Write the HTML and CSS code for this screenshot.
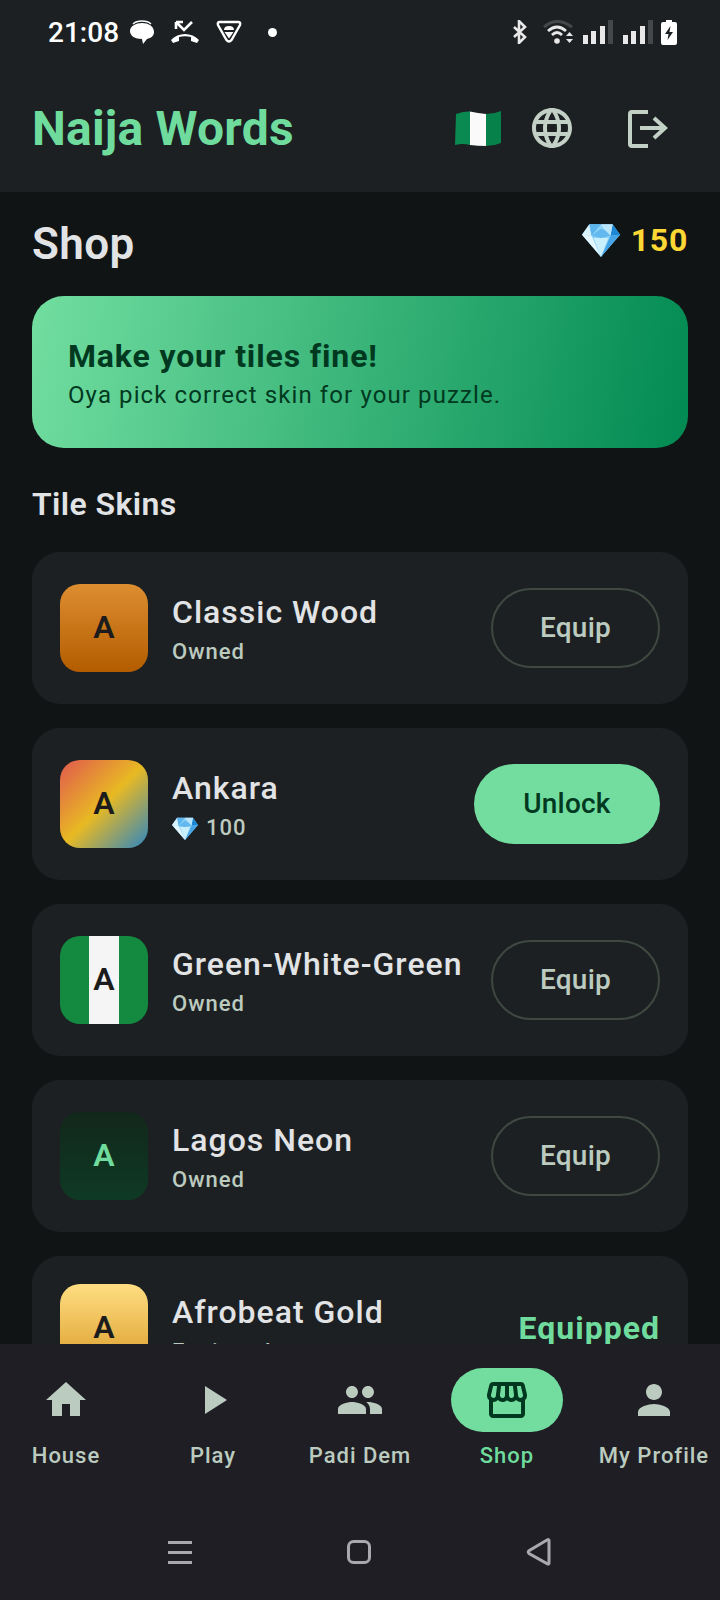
FILE: index.html
```html
<!DOCTYPE html>
<html lang="en">
<head>
  <meta charset="UTF-8" />
  <meta name="viewport" content="width=device-width, initial-scale=1.0"/>
  <title>Naija Words - Shop</title>
  <link rel="stylesheet" href="styles.css">
</head>
<body>
  <svg class="defs" width="0" height="0">
    <symbol id="gem" viewBox="0 0 36 32">
      <polygon points="7,1 29,1 36,11 18,32 0,11" fill="#8ed4f8"/>
      <polygon points="29,1 36,11 27,12" fill="#1a86d4"/>
      <polygon points="7,1 0,11 9,12" fill="#d8f3fd"/>
      <polygon points="7,1 18,1 9,12" fill="#5db5ee"/>
      <polygon points="18,1 29,1 27,12 22,7" fill="#b9e6fb"/>
      <polygon points="9,12 18,5 22,7 27,12 18,14" fill="#63b8ef"/>
      <polygon points="0,11 9,12 18,32" fill="#e4f7fe"/>
      <polygon points="27,12 36,11 18,32" fill="#45a5e6"/>
      <polygon points="11,14 25,14 18,32" fill="#c9eefc"/>
    </symbol>
    <symbol id="signal" viewBox="0 0 30 24">
      <rect x="0" y="15" width="5" height="9" fill="#e8e8e8"/>
      <rect x="8" y="11" width="5" height="13" fill="#e8e8e8"/>
      <rect x="17" y="6" width="5" height="18" fill="#e8e8e8"/>
      <rect x="25" y="0" width="5" height="24" fill="#45484a"/>
    </symbol>
  </svg>

  <div class="status-bar">
    <div class="status-group">
      <span class="clock">21:08</span>
      <svg class="ic-msg" width="24" height="24" viewBox="0 0 24 24">
        <path d="M3 4q3-3 9-3t9 3" fill="none" stroke="#fff" stroke-width="1.4"/>
        <path d="M12 3c6 0 12 3 12 9 0 4-3 6-7 7l-4 5-1-5C5 19 0 16 0 11 0 6 6 3 12 3z" fill="#fff"/>
      </svg>
      <svg width="30" height="24" viewBox="0 0 30 24">
        <path d="M6 2v7M6 2h7M6 2l8 8 8-8" fill="none" stroke="#fff" stroke-width="2.6"/>
        <path d="M1 20c7-8 21-8 28 0l-2 3-6-2v-4c-4-1-8-1-12 0v4l-6 2z" fill="#fff"/>
      </svg>
      <svg width="26" height="24" viewBox="0 0 26 24">
        <path d="M4 2h18q3 0 2 3L15.500 20q-2.500 3-5 0L2 5Q1 2 4 2z" fill="none" stroke="#fff" stroke-width="2.4"/>
        <path d="M8 10q0-4 5-4t5 4z" fill="#fff"/>
        <path d="M8.500 12h9L13 18.500z" fill="#fff"/>
      </svg>
      <span class="notif-dot"></span>
    </div>
    <div class="status-group status-right">
      <svg class="ic-bt" width="14" height="24" viewBox="0 0 14 24">
        <path d="M1 7l11 10-6 6V1l6 6L1 17" fill="none" stroke="#e8e8e8" stroke-width="2.6"/>
      </svg>
      <svg width="30" height="24" viewBox="0 0 30 24">
        <path d="M1 7Q14-4 29 7" fill="none" stroke="#45484a" stroke-width="3"/>
        <path d="M5 11q9-8 18 0" fill="none" stroke="#e8e8e8" stroke-width="2.8"/>
        <path d="M9 15q5-5 10 0" fill="none" stroke="#e8e8e8" stroke-width="2.8"/>
        <circle cx="14" cy="21" r="2.8" fill="#e8e8e8"/>
        <path d="M23 16l3.500-4 3.500 4zM23 19h7l-3.500 4z" fill="#e8e8e8"/>
      </svg>
      <svg width="30" height="24"><use href="#signal"/></svg>
      <svg width="30" height="24"><use href="#signal"/></svg>
      <svg class="ic-bat" width="16" height="25" viewBox="0 0 16 25">
        <path d="M5 0h6v2h3q2 0 2 2v19q0 2-2 2H2q-2 0-2-2V4q0-2 2-2h3z" fill="#fff"/>
        <path d="M9.500 6L4 14h3.500L6.500 20 12 12H8.500z" fill="#1c2022"/>
      </svg>
    </div>
  </div>

  <header class="app-bar">
    <h1 class="app-title">Naija Words</h1>
    <svg class="flag" width="46" height="36" viewBox="0 0 46 36">
      <path d="M1 4q7-3 14-2.500V35Q8 33 0 35z" fill="#0a8a50"/>
      <path d="M15 1.500q8 1.500 16 2.500v32q-8 0-16-1z" fill="#fafafa"/>
      <path d="M31 4q8 0 15-3v32q-7 3-15 3z" fill="#07814a"/>
    </svg>
    <svg class="icon-btn" width="48" height="48" viewBox="0 0 24 24">
      <path fill="#c2d0c5" d="M11.990 2C6.470 2 2 6.480 2 12s4.470 10 9.990 10C17.520 22 22 17.520 22 12S17.520 2 11.990 2zm6.930 6h-2.950c-.32-1.250-.78-2.450-1.380-3.560 1.840.63 3.370 1.910 4.330 3.560zM12 4.040c.83 1.200 1.480 2.530 1.910 3.960h-3.820c.43-1.430 1.080-2.760 1.910-3.960zM4.260 14C4.100 13.360 4 12.690 4 12s.1-1.360.26-2h3.380c-.08.66-.14 1.320-.14 2 0 .68.06 1.340.14 2H4.260zm.82 2h2.950c.32 1.250.78 2.450 1.380 3.560-1.840-.63-3.370-1.900-4.330-3.560zm2.950-8H5.080c.96-1.660 2.490-2.930 4.330-3.560C8.810 5.550 8.350 6.750 8.030 8zM12 19.960c-.83-1.200-1.480-2.530-1.910-3.960h3.820c-.43 1.430-1.080 2.760-1.910 3.960zM14.340 14H9.660c-.09-.66-.16-1.320-.16-2 0-.68.07-1.350.16-2h4.680c.09.65.16 1.320.16 2 0 .68-.07 1.340-.16 2zm.25 5.560c.6-1.110 1.060-2.310 1.380-3.560h2.950c-.96 1.650-2.490 2.930-4.330 3.560zM16.360 14c.08-.66.14-1.320.14-2 0-.68-.06-1.340-.14-2h3.380c.16.64.26 1.310.26 2s-.1 1.360-.26 2h-3.380z"/>
    </svg>
    <svg class="icon-btn logout" width="48" height="48" viewBox="0 0 48 48">
      <path d="M24 8H8q-2 0-2 2v30q0 2 2 2h16" fill="none" stroke="#c2d0c5" stroke-width="4"/>
      <path d="M16 24h24M30 14l11 10-11 10" fill="none" stroke="#c2d0c5" stroke-width="4"/>
    </svg>
  </header>

  <main class="content">
    <div class="page-head">
      <h2 class="page-title">Shop</h2>
      <div class="balance">
        <svg width="38" height="34"><use href="#gem"/></svg>
        <span>150</span>
      </div>
    </div>

    <section class="banner">
      <h3 class="banner-title">Make your tiles fine!</h3>
      <p class="banner-sub">Oya pick correct skin for your puzzle.</p>
    </section>

    <h3 class="section-title">Tile Skins</h3>

    <div class="skin-list">
      <div class="skin-card">
        <div class="swatch swatch-wood">A</div>
        <div class="skin-info">
          <div class="skin-name">Classic Wood</div>
          <div class="skin-meta">Owned</div>
        </div>
        <button class="btn btn-outline">Equip</button>
      </div>

      <div class="skin-card">
        <div class="swatch swatch-ankara">A</div>
        <div class="skin-info">
          <div class="skin-name">Ankara</div>
          <div class="skin-meta"><svg width="26" height="23"><use href="#gem"/></svg> 100</div>
        </div>
        <button class="btn btn-fill">Unlock</button>
      </div>

      <div class="skin-card">
        <div class="swatch swatch-gwg">A</div>
        <div class="skin-info">
          <div class="skin-name">Green-White-Green</div>
          <div class="skin-meta">Owned</div>
        </div>
        <button class="btn btn-outline">Equip</button>
      </div>

      <div class="skin-card">
        <div class="swatch swatch-neon">A</div>
        <div class="skin-info">
          <div class="skin-name">Lagos Neon</div>
          <div class="skin-meta">Owned</div>
        </div>
        <button class="btn btn-outline">Equip</button>
      </div>

      <div class="skin-card skin-card-short">
        <div class="swatch swatch-gold">A</div>
        <div class="skin-info">
          <div class="skin-name">Afrobeat Gold</div>
          <div class="skin-meta">Equipped</div>
        </div>
        <span class="equipped">Equipped</span>
      </div>
    </div>
  </main>

  <div class="bottom">
    <nav class="nav">
      <div class="nav-item">
        <div class="nav-icon">
          <svg width="48" height="48" viewBox="0 0 24 24"><path d="M10 20v-6h4v6h5v-8h3L12 3 2 12h3v8z"/></svg>
        </div>
        <span>House</span>
      </div>
      <div class="nav-item">
        <div class="nav-icon">
          <svg width="48" height="48" viewBox="0 0 24 24"><path d="M8 5v14l11-7z"/></svg>
        </div>
        <span>Play</span>
      </div>
      <div class="nav-item">
        <div class="nav-icon">
          <svg width="48" height="48" viewBox="0 0 24 24"><path d="M16 11c1.660 0 2.990-1.340 2.990-3S17.660 5 16 5c-1.660 0-3 1.340-3 3s1.340 3 3 3zm-8 0c1.660 0 2.990-1.340 2.990-3S9.660 5 8 5C6.340 5 5 6.340 5 8s1.340 3 3 3zm0 2c-2.330 0-7 1.170-7 3.500V19h14v-2.500c0-2.330-4.670-3.500-7-3.500zm8 0c-.29 0-.62.02-.97.05 1.160.84 1.970 1.970 1.970 3.450V19h6v-2.500c0-2.330-4.670-3.500-7-3.500z"/></svg>
        </div>
        <span>Padi Dem</span>
      </div>
      <div class="nav-item active">
        <div class="nav-icon">
          <svg width="48" height="48" viewBox="0 0 24 24"><path d="M21.900 8.890l-1.050-4.370c-.22-.9-1-1.520-1.910-1.520H5.050c-.9 0-1.690.63-1.900 1.520L2.100 8.890c-.24 1.020-.02 2.060.62 2.880.08.11.19.19.28.29V19c0 1.100.9 2 2 2h14c1.100 0 2-.9 2-2v-6.940c.09-.09.2-.18.28-.28.64-.82.87-1.870.62-2.890zm-2.990-3.900l1.050 4.370c.1.42.01.84-.25 1.170-.14.18-.44.47-.94.47-.61 0-1.140-.49-1.210-1.140L16.980 5l1.930-.01zM13 5h1.960l.54 4.520c.05.39-.07.78-.33 1.070-.22.26-.54.41-.95.41-.67 0-1.220-.59-1.220-1.310V5zM8.490 9.520L9.040 5H11v4.690c0 .72-.55 1.310-1.290 1.310-.34 0-.65-.15-.89-.41-.25-.29-.37-.68-.33-1.070zm-4.450-.16L5.050 5h1.970l-.58 4.860c-.08.65-.6 1.140-1.210 1.140-.49 0-.8-.29-.93-.47-.27-.32-.36-.75-.26-1.170zM5 19v-6.030c.08.01.15.03.23.03.87 0 1.660-.36 2.240-.95.6.6 1.400.95 2.310.95.87 0 1.650-.36 2.230-.93.59.57 1.390.93 2.290.93.84 0 1.640-.35 2.240-.95.58.59 1.370.95 2.240.95.08 0 .15-.02.23-.03V19H5z"/></svg>
        </div>
        <span>Shop</span>
      </div>
      <div class="nav-item">
        <div class="nav-icon">
          <svg width="48" height="48" viewBox="0 0 24 24"><path d="M12 12c2.210 0 4-1.790 4-4s-1.790-4-4-4-4 1.790-4 4 1.790 4 4 4zm0 2c-2.670 0-8 1.340-8 4v2h16v-2c0-2.660-5.330-4-8-4z"/></svg>
        </div>
        <span>My Profile</span>
      </div>
    </nav>

    <div class="gesture-bar">
      <svg width="24" height="24" viewBox="0 0 24 24">
        <path d="M0 2.500h24M0 12.500h24M0 22.500h24" stroke="#a9a9ad" stroke-width="3"/>
      </svg>
      <svg width="24" height="24" viewBox="0 0 24 24">
        <rect x="1.500" y="1.500" width="21" height="21" rx="5" fill="none" stroke="#a9a9ad" stroke-width="3"/>
      </svg>
      <svg width="26" height="28" viewBox="0 0 26 28">
        <path d="M23 2.500V25q0 1.500-1.500.8L3 15.500q-1.500-1.500 0-2.800L21 2q2-1 2 .5z" fill="none" stroke="#a9a9ad" stroke-width="3"/>
      </svg>
    </div>
  </div>
</body>
</html>
```

FILE: styles.css
```css
* {
  box-sizing: border-box;
  margin: 0;
  padding: 0;
  font-family: 'Roboto', sans-serif;
}

body {
  width: 720px;
  height: 1600px;
  background: #101415;
  color: #e2e3e5;
  display: flex;
  flex-direction: column;
  overflow: hidden;
}

.defs {
  position: absolute;
}

/* status bar */
.status-bar {
  height: 64px;
  background: #1c2022;
  display: flex;
  justify-content: space-between;
  align-items: center;
  padding: 0 43px 0 48px;
}

.status-group {
  display: flex;
  align-items: center;
  gap: 16px;
}

.status-right {
  gap: 10px;
}

.clock {
  font-size: 28px;
  font-weight: 500;
  color: #fff;
  margin-right: -5px;
}

.notif-dot {
  width: 9px;
  height: 9px;
  border-radius: 50%;
  background: #fff;
  margin-left: 10px;
}

.ic-bt {
  margin-right: 6px;
}

.ic-bat {
  margin-left: -2px;
}

/* top bar */
.app-bar {
  height: 128px;
  background: #1c2022;
  display: flex;
  align-items: center;
  padding: 0 48px 0 32px;
}

.app-title {
  font-size: 48px;
  font-weight: 700;
  color: #6fdc9e;
  letter-spacing: 0.2px;
  margin-right: auto;
}

.flag {
  margin-right: 27px;
}

.logout {
  margin-left: 48px;
}

/* page content */
.content {
  flex: 1;
  min-height: 0;
  overflow: hidden;
  padding: 20px 32px 0;
}

.page-head {
  height: 64px;
  display: flex;
  justify-content: space-between;
  align-items: flex-start;
  margin-bottom: 20px;
}

.page-title {
  font-size: 44px;
  font-weight: 600;
  line-height: 64px;
  letter-spacing: 0.4px;
}

.balance {
  height: 40px;
  margin-top: 8px;
  display: flex;
  align-items: center;
  gap: 11px;
  font-size: 32px;
  font-weight: 700;
  letter-spacing: 0.7px;
  color: #fdd835;
}

.banner {
  height: 152px;
  border-radius: 32px;
  padding: 0 36px;
  background: linear-gradient(100deg, #72dea0 0%, #018a52 100%);
  display: flex;
  flex-direction: column;
  justify-content: center;
  color: #00391f;
}

.banner-title {
  font-size: 32px;
  font-weight: 700;
  letter-spacing: 0.85px;
  line-height: 44px;
}

.banner-sub {
  font-size: 24px;
  letter-spacing: 1.1px;
  line-height: 32px;
  margin-top: 1px;
}

.section-title {
  font-size: 32px;
  font-weight: 600;
  line-height: 40px;
  letter-spacing: 0.4px;
  margin: 36px 0 28px;
}

.skin-list {
  display: flex;
  flex-direction: column;
  gap: 24px;
}

.skin-card {
  height: 152px;
  flex-shrink: 0;
  background: #1c2022;
  border-radius: 28px;
  padding: 0 28px;
  display: flex;
  align-items: center;
}

.skin-card-short {
  height: 144px;
}

.swatch {
  width: 88px;
  height: 88px;
  border-radius: 20px;
  flex-shrink: 0;
  display: flex;
  align-items: center;
  justify-content: center;
  padding-bottom: 2px;
  font-size: 32px;
  font-weight: 600;
  color: #1c1c1c;
  margin-right: 24px;
}

.swatch-wood {
  background: linear-gradient(180deg, #dd8e30, #b35c00);
}

.swatch-ankara {
  background: linear-gradient(135deg, #e0584f 0%, #e8b923 50%, #2f86c1 100%);
}

.swatch-gwg {
  background: linear-gradient(90deg, #138a3f 33.3%, #f5f5f5 33.3%, #f5f5f5 66.6%, #138a3f 66.6%);
}

.swatch-neon {
  background: linear-gradient(180deg, #12271a, #0e3a24);
  color: #6fdc9e;
}

.swatch-gold {
  background: linear-gradient(180deg, #ffde82, #d99a26);
}

.skin-info {
  flex: 1;
  min-width: 0;
  padding-top: 2px;
}

.skin-name {
  font-size: 32px;
  font-weight: 500;
  letter-spacing: 1px;
  line-height: 44px;
  white-space: nowrap;
}

.skin-meta {
  font-size: 22px;
  font-weight: 500;
  letter-spacing: 1px;
  line-height: 32px;
  margin-top: 2px;
  color: #bccbbf;
  display: flex;
  align-items: center;
  gap: 8px;
}

.btn {
  height: 80px;
  border-radius: 40px;
  padding-bottom: 2px;
  font-size: 28px;
  font-weight: 500;
  letter-spacing: 0.2px;
  flex-shrink: 0;
}

.btn-outline {
  width: 169px;
  background: none;
  border: 2px solid #3f4941;
  color: #bccbbf;
}

.btn-fill {
  width: 186px;
  background: #72dd9f;
  border: none;
  color: #00391f;
}

.equipped {
  font-size: 32px;
  font-weight: 700;
  letter-spacing: 1px;
  color: #6fdc9e;
}

/* bottom nav */
.bottom {
  height: 256px;
  background: #1e1e24;
}

.nav {
  display: flex;
  justify-content: center;
  padding-top: 24px;
}

.nav-item {
  flex: 0 0 147px;
  display: flex;
  flex-direction: column;
  align-items: center;
  font-size: 22px;
  font-weight: 500;
  letter-spacing: 1px;
  color: #bccbbf;
}

.nav-icon {
  width: 112px;
  height: 64px;
  border-radius: 32px;
  display: flex;
  align-items: center;
  justify-content: center;
  margin-bottom: 8px;
}

.nav-icon svg {
  fill: #bccbbf;
}

.nav-item span {
  line-height: 32px;
  white-space: nowrap;
}

.active {
  color: #6fdc9e;
}

.active .nav-icon {
  background: #72dd9f;
}

.active .nav-icon svg {
  fill: #00391f;
}

.gesture-bar {
  display: flex;
  justify-content: center;
  align-items: center;
  gap: 155px;
  margin-top: 66px;
}
```
